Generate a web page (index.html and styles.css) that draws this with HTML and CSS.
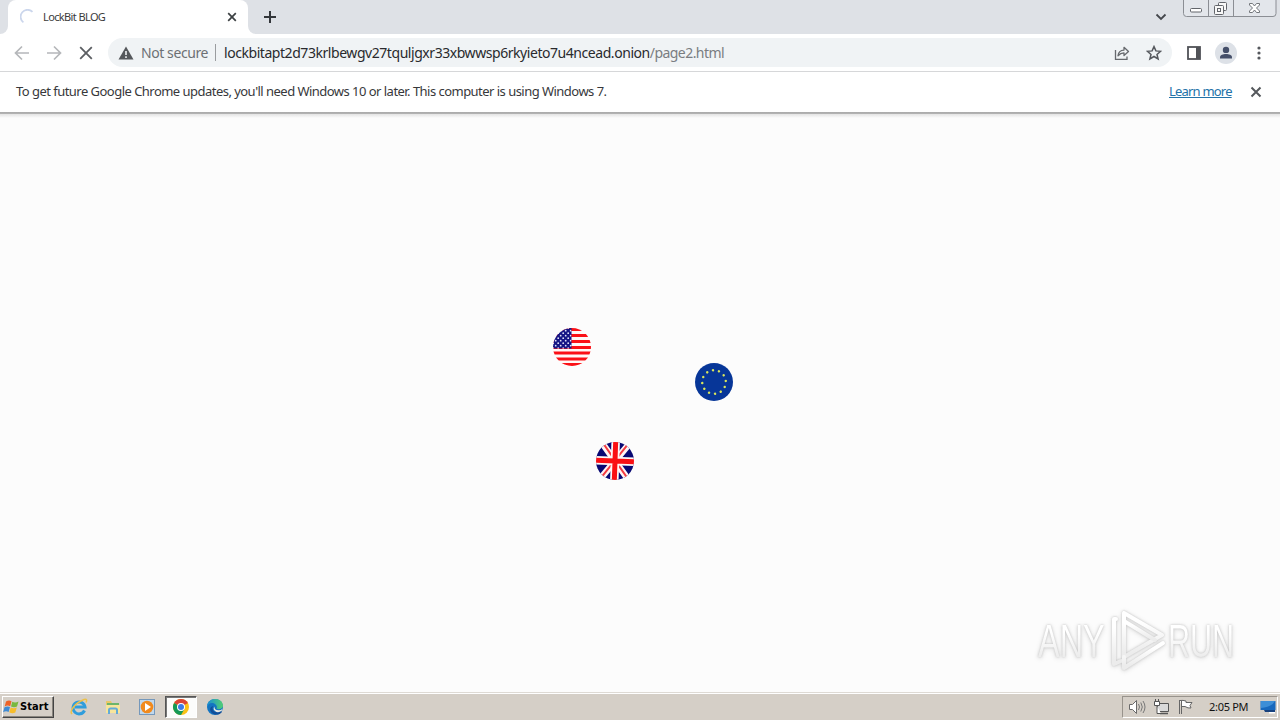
FILE: index.html
```html
<!DOCTYPE html>
<html lang="en">
<head>
<meta charset="utf-8">
<title>LockBit BLOG</title>
<link rel="stylesheet" href="styles.css">
</head>
<body>
<div class="screen">
  <header class="tabstrip">
    <div class="edge"></div>
    <div class="tab">
      <svg class="spinner" width="16" height="16" viewBox="0 0 16 16"><path d="M3.400 13.400A7 7 0 1 1 12.500 2.800" fill="none" stroke="#cbd6ec" stroke-width="1.800"/></svg>
      <span class="tab-title">LockBit BLOG</span>
      <svg class="tab-close" width="10" height="10" viewBox="0 0 10 10"><path d="M1.200 1.200l7.600 7.600M8.800 1.200L1.200 8.800" stroke="#3c4043" stroke-width="1.700"/></svg>
    </div>
    <div class="after-tab">
      <svg width="14" height="14" viewBox="0 0 14 14"><path d="M7 1v12M1 7h12" stroke="#33363b" stroke-width="2"/></svg>
    </div>
    <svg class="chevron" width="12" height="8" viewBox="0 0 12 8"><path d="M1.500 1.500L6 6l4.500-4.500" fill="none" stroke="#44474c" stroke-width="1.800"/></svg>
    <svg class="winbuttons" width="94" height="18" viewBox="0 0 94 18">
      <path d="M.5 0v13.500q0 3 3 3H90q3 0 3-3V0" fill="#e3e6eb" stroke="#8b8e94"/>
      <path d="M25.500 0v16M50.500 0v16" stroke="#8b8e94"/>
      <rect x="7.500" y="8.500" width="11" height="3.500" rx="1" fill="#fff" stroke="#62656b"/>
      <g fill="#f8f8f8" stroke="#62656b"><rect x="35.500" y="2.500" width="8" height="8" rx="1"/><rect x="31.500" y="5.500" width="9" height="9" rx="1"/><rect x="34.500" y="8.500" width="3" height="3"/></g>
      <path d="M66.500 3.500h3l2 2.500 2-2.500h3v1.500l-3 3 3 3v1.500h-3l-2-2.500-2 2.500h-3V11l3-3-3-3z" fill="#fff" stroke="#73767b"/>
    </svg>
  </header>

  <nav class="toolbar">
    <div class="nav-icons">
      <svg width="16" height="16" viewBox="0 0 16 16"><path d="M15 8H2M8 1.500L1.500 8 8 14.500" fill="none" stroke="#b5b7ba" stroke-width="1.700"/></svg>
      <svg width="16" height="16" viewBox="0 0 16 16"><path d="M1 8h13M8 1.500L14.500 8 8 14.500" fill="none" stroke="#b5b7ba" stroke-width="1.700"/></svg>
      <svg width="16" height="16" viewBox="0 0 16 16"><path d="M2.200 2.200l11.600 11.600M13.800 2.200L2.200 13.800" stroke="#5b5e62" stroke-width="1.800"/></svg>
    </div>
    <div class="omnibox">
      <svg class="warn" width="16" height="14" viewBox="0 0 16 14"><path d="M8 .5L15.500 13.500H.5z" fill="#55585c"/><path d="M8 5v4M8 10.200v1.800" stroke="#f1f3f4" stroke-width="1.600"/></svg>
      <span class="insecure">Not secure</span>
      <span class="sep"></span>
      <span class="url"><span class="domain">lockbitapt2d73krlbewgv27tquljgxr33xbwwsp6rkyieto7u4ncead.onion</span><span class="path">/page2.html</span></span>
      <svg class="share" width="16" height="16" viewBox="0 0 16 16"><g fill="none" stroke="#66696d" stroke-width="1.300"><path d="M1.500 5v9.300h11.500v-2.800"/><path d="M4 10.800C4.400 7.300 6.500 5.200 10 5.100V2.300l4.500 4.200L10 10.500V7.900C7.500 7.900 5.700 8.800 4 10.800z" stroke-linejoin="round"/></g></svg>
      <svg class="star" width="16" height="16" viewBox="0 0 16 16"><path d="M8 1.600l1.900 4.300 4.700.4-3.600 3.100 1.100 4.600L8 11.500 3.900 14 5 9.400 1.400 6.300l4.700-.4z" fill="none" stroke="#55585d" stroke-width="1.500"/></svg>
    </div>
    <svg class="panel" width="14" height="14" viewBox="0 0 14 14"><rect x="1" y="1" width="12" height="12" fill="#fff" stroke="#505257" stroke-width="1.800"/><path d="M9 1h4v12H9z" fill="#505257"/></svg>
    <svg class="avatar" width="22" height="22" viewBox="0 0 22 22"><circle cx="11" cy="11" r="11" fill="#dde1e7"/><circle cx="11" cy="7.900" r="3.200" fill="#454f69"/><path d="M5 16.500v-1.300c0-2 3-3.200 6-3.200s6 1.200 6 3.200v1.300z" fill="#454f69"/></svg>
    <svg class="dots" width="4" height="14" viewBox="0 0 4 14"><g fill="#55585d"><circle cx="2" cy="2" r="1.600"/><circle cx="2" cy="7" r="1.600"/><circle cx="2" cy="12" r="1.600"/></g></svg>
  </nav>

  <section class="infobar">
    <span class="message">To get future Google Chrome updates, you'll need Windows 10 or later. This computer is using Windows 7.</span>
    <a class="learn">Learn more</a>
    <svg width="12" height="12" viewBox="0 0 12 12"><path d="M1.500 1.500l9 9M10.500 1.500l-9 9" stroke="#55585c" stroke-width="2"/></svg>
  </section>

  <main class="page">
    <svg class="flag us" width="40" height="40" viewBox="0 0 40 40">
      <defs><clipPath id="disc"><circle cx="20" cy="20" r="19"/></clipPath><pattern id="stars" width="5" height="5" patternUnits="userSpaceOnUse"><rect width="5" height="5" fill="#151585"/><circle cx="1.200" cy="1.200" r=".9" fill="#dfe1f7"/><circle cx="3.700" cy="3.700" r=".9" fill="#dfe1f7"/></pattern></defs>
      <g clip-path="url(#disc)"><path d="M0 0h40v40H0z" fill="#fff8f6"/><path d="M0 2.500h40M0 8.500h40M0 14.500h40M0 20.400h40M0 26.100h40M0 31.900h40M0 37.600h40" stroke="#fb1016" stroke-width="3"/><path d="M0 0h19.500v21.500H0z" fill="url(#stars)"/></g>
    </svg>
    <svg class="flag eu" width="40" height="40" viewBox="0 0 40 40">
      <circle cx="20" cy="20" r="19" fill="#073698"/><circle cx="20" cy="20" r="11.800" fill="none" stroke="#d9e65c" stroke-width="2.500" stroke-linecap="round" pathLength="120" stroke-dasharray="0.010 9.990" transform="rotate(-5 20 20)"/>
    </svg>
    <svg class="flag uk" width="40" height="40" viewBox="0 0 40 40">
      <g clip-path="url(#disc)"><g transform="rotate(2 20 20)"><path d="M-1-1h42v42H-1z" fill="#080873"/><path d="M3-2l34 44M37-2L3 42" stroke="#fff5f4" stroke-width="6.500"/><path d="M4-2l33 44M36-2L3 42" stroke="#f43c42" stroke-width="2"/><path d="M20-1v42M-1 20h42" stroke="#fff8f7" stroke-width="8.500"/><path d="M20-1v42M-1 20h42" stroke="#fa1014" stroke-width="5"/></g></g>
    </svg>
    <div class="watermark">
      <span class="any">ANY</span>
      <svg width="62" height="66" viewBox="0 0 62 66"><defs><linearGradient id="fade" x2="0" y2="1"><stop offset=".2" stop-color="#fff"/><stop offset=".9" stop-color="#ececec"/></linearGradient></defs><g fill="none" stroke="url(#fade)" stroke-width="4" stroke-linejoin="round" stroke-linecap="round"><path d="M18 5v44l38-22z"/><path d="M10 11H8v45l7-3"/><path d="M18 49v11l39-25"/><path d="M18 13l31 19"/></g></svg>
      <span class="run">RUN</span>
    </div>
  </main>

  <footer class="taskbar">
    <div class="start">
      <svg width="17" height="16" viewBox="0 0 17 16"><path d="M3 2.500q3-1.700 5.500-.2L7.200 7.200Q4.500 5.800 1.700 7.400z" fill="#ee6327"/><path d="M9.300 2.800q3 1.500 6.200-.3L14 7.600q-3 1.500-6-.1z" fill="#79b83e"/><path d="M1.500 8.300q2.900-1.600 5.500-.2L5.600 13q-2.600-1.400-5.500.2z" fill="#3f8bd4"/><path d="M7.700 8.500q3 1.500 6.100 0L12.300 13.600q-3 1.600-6-.3z" fill="#f6bd2c"/></svg>
      <span>Start</span>
    </div>
    <div class="launch">
      <svg width="18" height="18" viewBox="0 0 18 18"><path d="M14.500 12.500A6 6 0 1 1 15 9H5" fill="none" stroke="#2f9ddc" stroke-width="3"/><path d="M2 16C-1 13 5 5 14 1.500c3-1 3 1 2 3" fill="none" stroke="#ecc14a" stroke-width="1.500"/></svg>
    </div>
    <div class="launch">
      <svg width="18" height="18" viewBox="0 0 18 18"><path d="M2 3h5l1 2h7v10H2z" fill="#e9c867"/><path d="M3 5h12v2H3z" fill="#6db56a"/><path d="M2 7h14v8H2z" fill="#f7e59b"/><path d="M5 16v-4q0-1.500 1.500-1.500h5q1.500 0 1.500 1.500v4" fill="none" stroke="#63abd7" stroke-width="2"/></svg>
    </div>
    <div class="launch">
      <svg width="18" height="18" viewBox="0 0 18 18"><rect x="1.500" y="1.500" width="15" height="15" fill="#c0d8ed" stroke="#7598bb"/><circle cx="9" cy="9" r="6.300" fill="#f18a1d"/><path d="M7 5l6 4-6 4z" fill="#fff"/></svg>
    </div>
    <div class="launch active">
      <svg width="18" height="18" viewBox="0 0 18 18"><circle cx="9" cy="9" r="8" fill="#fbc116"/><path d="M9 9L2.070 5A8 8 0 0 1 15.930 5z" fill="#db4437"/><path d="M2.070 5A8 8 0 0 0 9 17l3.500-6L9 9z" fill="#159957"/><circle cx="9" cy="9" r="4" fill="#fff"/><circle cx="9" cy="9" r="3" fill="#3c7be7"/></svg>
    </div>
    <div class="launch">
      <svg width="18" height="18" viewBox="0 0 18 18"><defs><linearGradient id="edge"><stop stop-color="#198ed5"/><stop offset="1" stop-color="#52cf72"/></linearGradient></defs><circle cx="9" cy="9" r="8" fill="#1474c1"/><path d="M1 9C1-1.500 17-1.500 17 8c0 3-5 4-6.500 2.500C12 8 9 5 6 5 3.500 5 1.500 7 1 9z" fill="url(#edge)"/><path d="M7 8c-2 5 3 8 8 5l1 1c-2 3-7 3.500-10 1-3-3-2-6 1-7z" fill="#124e99"/><path d="M8.500 8.500q-.5 3.500 4 3.800 2.700 0 4-1.500l-.8 2Q12 15.500 9 13q-2.500-2-.5-4.500z" fill="#eeeae3"/></svg>
    </div>
    <div class="tray">
      <svg width="18" height="16" viewBox="0 0 18 16"><path d="M1.500 5.500h3l4-4v13l-4-4h-3z" fill="#fff" stroke="#696969"/><path d="M10.500 5q2 3 0 6M12.800 3.500q3 4.500 0 9M15 2q4 6 0 12" fill="none" stroke="#777"/></svg>
      <svg width="17" height="16" viewBox="0 0 17 16"><path d="M4.500 4.500h11v8h-11z" fill="#d9d9d9" stroke="#555"/><path d="M7 14.500h8" stroke="#555" stroke-width="1.500"/><path d="M1.500 2.500h5v4h-5zM2.500 0v2M5.500 0v2M4 7v7.500h4" fill="#fff" stroke="#555"/></svg>
      <svg width="17" height="16" viewBox="0 0 17 16"><path d="M2.500 1v14M4.500 2v13M3 1.500q3-.5 6 .5v1.500h6l-2 3 1 2.500q-3 .5-6-1.500H4.500" fill="#fff" stroke="#666"/></svg>
      <span class="clock">2:05 PM</span>
      <svg class="desktop" width="16" height="14" viewBox="0 0 16 14"><path d="M.5 1h15v9H.5z" fill="#1768bd"/><path d="M1 1h14q-3 6-14 7z" fill="#3c8ed7"/><path d="M4 10h11v2H5z" fill="#18427e"/><path d="M9 12h6v1.500H9z" fill="#fff"/></svg>
    </div>
  </footer>
</div>
</body>
</html>
```

FILE: styles.css
```css
* { box-sizing: border-box; }
body { margin: 0; }
svg { display: block; flex: none; }
.screen { width: 1280px; height: 720px; display: flex; flex-direction: column; overflow: hidden; background: #fcfcfc; font-family: "Noto Sans", sans-serif; white-space: nowrap; }
.tabstrip { height: 34px; flex: none; display: flex; align-items: flex-start; background: linear-gradient(#dee1e6 24px, #fff 24px); }
.edge { width: 8px; height: 34px; background: #dee1e6; border-bottom-right-radius: 8px; }
.tab { width: 240px; height: 34px; display: flex; align-items: center; padding-left: 12px; background: #fff; border-radius: 8px 8px 0 0; }
.tab-title { width: 184px; margin: -2px 0 0 7px; font-size: 11px; color: #3b3b3b; letter-spacing: -.62px; }
.after-tab { flex: 1; height: 34px; padding: 10px 0 0 15px; background: #dee1e6; border-bottom-left-radius: 8px; }
.chevron { width: 28px; height: 34px; padding: 13px 16px 13px 0; background: #dee1e6; }
.winbuttons { width: 97px; height: 34px; padding: 0 3px 16px 0; background: #dee1e6; }
.toolbar { height: 38px; flex: none; display: flex; align-items: center; background: #fff; border-bottom: 1px solid #d6d7d9; }
.nav-icons { display: flex; gap: 16px; padding-left: 14px; width: 108px; }
.omnibox { width: 1064px; height: 29px; border-radius: 15px; background: #f0f3f5; display: flex; align-items: center; padding-left: 10px; font-size: 14px; }
.insecure { width: 74px; margin-left: 7px; color: #6d7074; letter-spacing: -.42px; }
.sep { width: 1px; height: 17px; background: #9a9c9f; margin-right: 8px; }
.url { flex: 1; }
.domain { color: #292a2d; letter-spacing: -.445px; }
.path { color: #7a7d81; letter-spacing: -.56px; }
.share { margin-right: 16px; }
.star { margin-right: 10px; }
.panel { margin-left: 15px; }
.avatar { margin-left: 14px; }
.dots { margin-left: 20px; }
.infobar { height: 40px; flex: none; display: flex; align-items: center; padding: 0 18px 0 16px; background: #fff; font-size: 13px; color: #37383b; }
.message { flex: 1; margin-top: -2px; letter-spacing: -.53px; }
.learn { width: 62px; margin: -2px 19px 0 0; color: #2272a8; text-decoration: underline; text-underline-offset: 1px; letter-spacing: -.8px; }
.page { flex: 1; position: relative; background: linear-gradient(#aaa 0, #b4b4b4 2px, #e3e3e3 2px, #fcfcfc 6px); }
.flag { position: absolute; }
.us { left: 552px; top: 215px; }
.eu { left: 694px; top: 250px; }
.uk { left: 595px; top: 329px; }
.watermark { position: absolute; left: 1038px; top: 496px; height: 66px; width: 198px; display: flex; align-items: center; font: 47px "Liberation Sans", sans-serif; filter: drop-shadow(0 0 1px #c3c3c3) drop-shadow(0 1px 2px #dfdfdf); }
.watermark span { width: 105px; height: 58px; line-height: 58px; transform-origin: left; flex: none; background: linear-gradient(#fff 35%, #ebebeb 80%); background-clip: text; color: transparent; }
.any { transform: scaleX(.69); margin-right: -37px; }
.run { transform: scaleX(.65); }
.taskbar { height: 28px; flex: none; display: flex; align-items: center; padding: 0 2px 0 2px; background: #d5cfc7; border-top: 1px solid #dedad4; box-shadow: inset 0 1px #fff; }
.start { width: 52px; height: 22px; display: flex; align-items: center; border: 1px solid; border-color: #fff #444 #444 #fff; box-shadow: inset -1px -1px #89857e; margin-right: 9px; font: bold 11px "DejaVu Sans Condensed", sans-serif; color: #000; }
.start span { letter-spacing: .1px; }
.launch { width: 32px; height: 22px; margin-right: 2px; display: grid; place-items: center; }
.active { border: 1px solid; border-color: #555 #fff #fff #555; background: #fcfcfb; box-shadow: inset 1px 1px #777; }
.tray { width: 156px; height: 22px; margin-left: auto; display: flex; align-items: center; padding-left: 5px; border: 1px solid; border-color: #98938c #fff #fff #98938c; gap: 7px; }
.clock { width: 42px; margin-left: 8px; font-size: 11px; color: #111; letter-spacing: -.3px; }
.desktop { margin-left: 2px; }
```
